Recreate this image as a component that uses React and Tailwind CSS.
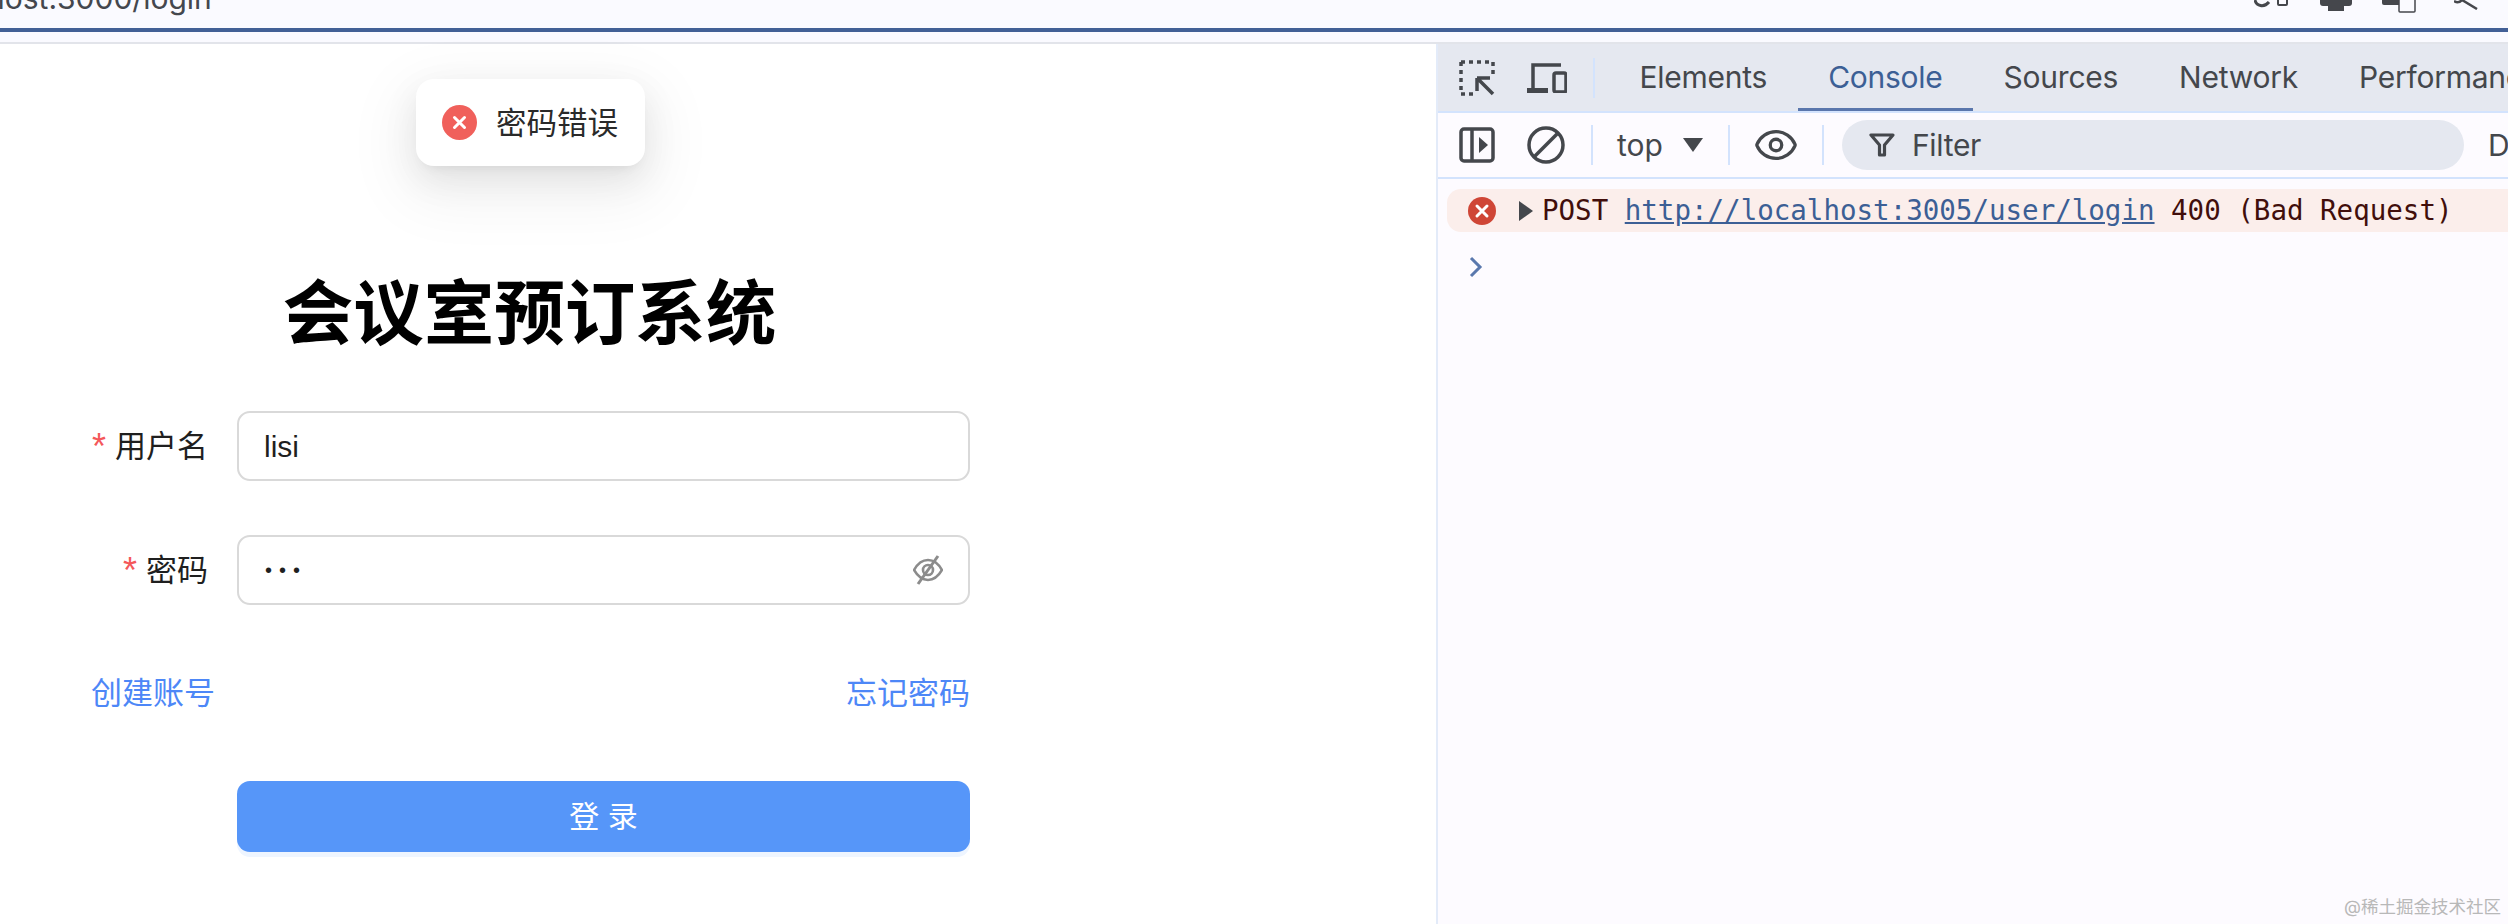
import { Eye } from 'lucide-react';

const cjk = 'font-["Inter","Noto_Sans_CJK_SC",sans-serif]';

const tabs = ['Elements', 'Console', 'Sources', 'Network', 'Performance'];

const Separator = ({ className = '' }) => (
  <div className={`w-[2px] h-[40px] shrink-0 bg-[#d3e3fd] ${className}`} />
);

const BrowserBar = () => (
  <div className="h-[44px] shrink-0 bg-[#fafaff] relative">
    <div className="h-[28px] overflow-hidden flex justify-between">
      <div className="-mt-[22px] -ml-[13px] font-['Inter',sans-serif] text-[30px] leading-[40px] text-[#44474e] whitespace-nowrap">
        host:3000/login
      </div>
      <div className="flex items-start text-[#45474c]">
        <svg width="36" height="12" viewBox="0 0 36 12">
          <path d="M1 0c1 6 9 8 14 2" fill="none" stroke="currentColor" strokeWidth="3" />
          <rect x="24" y="-2" width="9" height="7" rx="1" fill="none" stroke="currentColor" strokeWidth="2" />
        </svg>
        <svg width="34" height="12" viewBox="0 0 34 12" className="ml-[29px]">
          <rect x="1" y="-8" width="32" height="14" rx="3" fill="currentColor" />
          <rect x="9" y="6" width="16" height="5" fill="currentColor" />
        </svg>
        <svg width="34" height="13" viewBox="0 0 34 13" className="ml-[29px]">
          <rect x="0" y="-6" width="22" height="11" rx="2" fill="currentColor" />
          <rect x="17" y="-4" width="16" height="16" rx="1" fill="#fafaff" stroke="currentColor" strokeWidth="1.5" />
        </svg>
        <svg width="24" height="10" viewBox="0 0 24 10" className="ml-[38px] mr-[30px]">
          <path d="M0 1c3 2 6 1 8-1M8 0l15 9" fill="none" stroke="currentColor" strokeWidth="2.5" />
        </svg>
      </div>
    </div>
    <div className="h-[4px] bg-[#426096]" />
    <div className="h-[2px] mt-[10px] bg-[#e2e4ea]" />
  </div>
);

const FormRow = ({ label, children }) => (
  <div className="flex h-[70px] items-center">
    <label className="w-[146px] pr-[29px] flex justify-end items-center text-[31px] text-[#1f1f1f] whitespace-nowrap">
      <span className="text-[#f4585a] font-['Liberation_Sans',sans-serif] text-[36px] leading-none mr-[9px] mt-[2px]">*</span>
      {label}
    </label>
    <div className="flex-1 h-full border-2 border-[#d9d9d9] rounded-[13px] bg-white flex items-center justify-between pl-[25px] pr-[25px]">
      {children}
    </div>
  </div>
);

const LoginPane = () => (
  <div className={`w-[1436px] shrink-0 bg-white relative ${cjk}`}>
    {/* error message toast */}
    <div className="absolute left-[416px] top-[35px] w-[229px] h-[87px] rounded-[18px] bg-white flex items-center pl-[26px] shadow-[0_13px_35px_0_rgba(0,0,0,0.08),0_7px_13px_-9px_rgba(0,0,0,0.12),0_20px_60px_17px_rgba(0,0,0,0.05)]">
      <svg width="35" height="35" viewBox="0 0 35 35" className="shrink-0">
        <circle cx="17.5" cy="17.5" r="17.5" fill="#f0605b" />
        <path d="M12.5 12.5l10 10M22.5 12.5l-10 10" stroke="#fff" strokeWidth="3" strokeLinecap="round" />
      </svg>
      <span className="ml-[19px] text-[30.5px] text-[#2a2a2a] whitespace-nowrap">密码错误</span>
    </div>

    <div className="ml-[91px] w-[879px] pt-[230px]">
      <h1 className="h-[80px] pr-[2px] text-center text-[70.5px] leading-[80px] font-bold text-black whitespace-nowrap">
        会议室预订系统
      </h1>

      <div className="mt-[57px] flex flex-col gap-[54px]">
        <FormRow label="用户名">
          <span className="font-['Liberation_Sans',sans-serif] text-[30px] text-[#1f1f1f]">lisi</span>
        </FormRow>
        <FormRow label="密码">
          <span className="font-['Liberation_Sans',sans-serif] text-[20px] tracking-[7px] text-[#1f1f1f] pl-[1px]">•••</span>
          <svg width="30" height="30" viewBox="0 0 30 30" fill="none" stroke="#8c8c8c" strokeWidth="2.6" className="shrink-0">
            <path d="M1 15c4-7 9-10 14-10s10 3 14 10c-4 7-9 10-14 10S5 22 1 15z" />
            <circle cx="15" cy="15" r="5" />
            <path d="M25 1L5 29" strokeWidth="3" />
          </svg>
        </FormRow>
      </div>

      <div className="mt-[68px] h-[40px] flex items-center justify-between text-[31px] text-[#4d87f7]">
        <a>创建账号</a>
        <a>忘记密码</a>
      </div>

      <div className="mt-[68px] ml-[146px]">
        <button className="w-full h-[71px] rounded-[13px] bg-[#5696f9] text-white text-[30px] shadow-[0_5px_0_#eef5ff]">
          登 录
        </button>
      </div>
    </div>
  </div>
);

const DevTools = () => (
  <div className="flex-1 min-w-0 flex flex-col border-l-2 border-[#e3ebf9] bg-[#fdfbff] overflow-hidden font-['Inter',sans-serif] text-[#44474c] relative">
    {/* tabs */}
    <div className="h-[67px] shrink-0 bg-[#e5e8f0] flex items-center pl-[21px]">
      <svg width="36" height="36" viewBox="0 0 36 36" fill="none" stroke="#44474c" strokeWidth="3.5" className="shrink-0">
        <path d="M2 2h32M2 2v32M2 34h14M34 2v14" strokeDasharray="4 4" />
        <path d="M18 18h13M18 18v13M18 18l16 16" strokeWidth="3.5" />
      </svg>
      <svg width="40" height="30" viewBox="0 0 40 30" className="ml-[32px] shrink-0 text-[#44474c]">
        <path d="M6 28V2h28" fill="none" stroke="currentColor" strokeWidth="3.5" />
        <rect x="0" y="25" width="21" height="5" fill="currentColor" />
        <rect x="27" y="10" width="12" height="19" rx="2" fill="none" stroke="currentColor" strokeWidth="3.5" />
      </svg>
      <Separator className="ml-[26px]" />
      <div className="flex h-full ml-[14px]">
        {tabs.map((tab) => (
          <div
            key={tab}
            className={`relative h-full flex items-center px-[30.5px] text-[30px] tracking-[-0.25px] whitespace-nowrap ${tab === 'Console' ? 'text-[#3c5f95]' : ''}`}
          >
            {tab}
            {tab === 'Console' && <div className="absolute left-0 right-0 bottom-0 h-[3px] bg-[#5a76ac]" />}
          </div>
        ))}
      </div>
    </div>
    <div className="h-[2px] shrink-0 bg-[#d3e3fd]" />

    {/* console toolbar */}
    <div className="h-[64px] shrink-0 flex items-center pl-[21px]">
      <svg width="36" height="36" viewBox="0 0 36 36" fill="none" stroke="#44474c" strokeWidth="3.5" className="shrink-0">
        <rect x="2" y="2" width="32" height="32" rx="3" />
        <path d="M13 2v32" />
        <path d="M20 10l9 8-9 8z" fill="#44474c" stroke="none" />
      </svg>
      <svg width="38" height="38" viewBox="0 0 38 38" fill="none" stroke="#44474c" strokeWidth="3.5" className="ml-[32px] shrink-0">
        <circle cx="19" cy="19" r="17" />
        <path d="M7 31L31 7" />
      </svg>
      <Separator className="ml-[26px]" />
      <span className="ml-[24px] text-[30px] leading-none">top</span>
      <div className="ml-[20px] w-0 h-0 border-l-[10px] border-r-[10px] border-t-[14px] border-l-transparent border-r-transparent border-t-[#44474c]" />
      <Separator className="ml-[25px]" />
      <Eye size={46} strokeWidth={1.7} className="ml-[23px] shrink-0" />
      <Separator className="ml-[23px]" />
      <div className="ml-[18px] w-[622px] h-[50px] shrink-0 rounded-full bg-[#e5e8f0] flex items-center pl-[27px]">
        <svg width="26" height="26" viewBox="0 0 26 26" fill="none" stroke="#44474c" strokeWidth="3.2" strokeLinejoin="round" className="shrink-0">
          <path d="M2 3h22l-8.500 10v10h-5V13z" />
        </svg>
        <span className="ml-[17px] text-[30px] leading-none tracking-[-0.3px]">Filter</span>
      </div>
      <span className="ml-[24px] text-[30px] leading-none">D</span>
    </div>
    <div className="h-[2px] shrink-0 bg-[#d3e3fd]" />

    {/* messages */}
    <div className="mt-[10px] ml-[9px] h-[43px] shrink-0 rounded-l-[14px] bg-[#fbeeeb] flex items-center pl-[21px] whitespace-nowrap font-['DejaVu_Sans_Mono',monospace] text-[27.5px] text-[#410e0b]">
      <svg width="28" height="28" viewBox="0 0 28 28" className="shrink-0">
        <circle cx="14" cy="14" r="14" fill="#cf4636" />
        <path d="M9 9l10 10M19 9L9 19" stroke="#fff" strokeWidth="3" strokeLinecap="round" />
      </svg>
      <div className="ml-[23px] w-0 h-0 border-t-[10px] border-b-[10px] border-l-[14px] border-t-transparent border-b-transparent border-l-[#44474c]" />
      <span className="ml-[9px]">POST</span>
      <a className="ml-[16.500px] text-[#3c5f95] underline">http://localhost:3005/user/login</a>
      <span className="ml-[16.500px]">400 (Bad Request)</span>
    </div>
    <svg width="14" height="22" viewBox="0 0 14 22" fill="none" stroke="#5a78ad" strokeWidth="3" className="mt-[24px] ml-[31px] shrink-0">
      <path d="M2 2l9 9-9 9" />
    </svg>

    <span className={`absolute right-[7px] bottom-[6px] text-[17.500px] leading-[22px] text-[#b8b8b8] whitespace-nowrap ${cjk}`}>
      @稀土掘金技术社区
    </span>
  </div>
);

export default function App() {
  return (
    <div className="w-[2508px] h-[924px] flex flex-col overflow-hidden bg-white">
      <BrowserBar />
      <div className="flex-1 min-h-0 flex">
        <LoginPane />
        <DevTools />
      </div>
    </div>
  );
}
